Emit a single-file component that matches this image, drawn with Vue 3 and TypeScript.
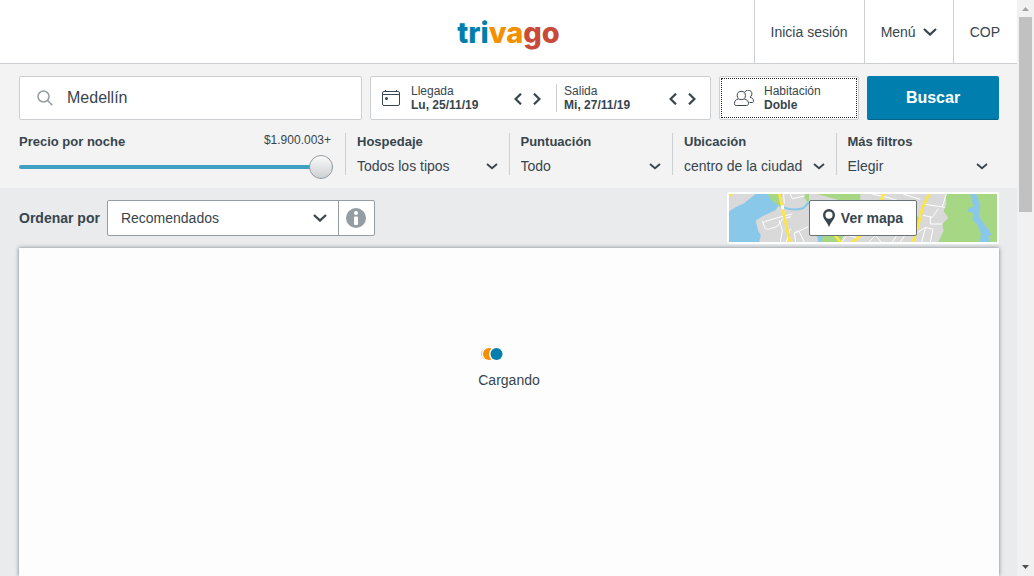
<script setup lang="ts">
import { ref } from 'vue'

interface Filter {
  id: string
  label: string
  options: string[]
}

interface Stay {
  id: string
  label: string
  value: string
}

const destination = ref('Medellín')
const price = ref(100)
const sort = ref('Recomendados')

const stays: Stay[] = [
  { id: 'arrival', label: 'Llegada', value: 'Lu, 25/11/19' },
  { id: 'departure', label: 'Salida', value: 'Mi, 27/11/19' },
]

const filters: Filter[] = [
  { id: 'lodging', label: 'Hospedaje', options: ['Todos los tipos'] },
  { id: 'rating', label: 'Puntuación', options: ['Todo'] },
  { id: 'location', label: 'Ubicación', options: ['centro de la ciudad'] },
  { id: 'more', label: 'Más filtros', options: ['Elegir'] },
]
</script>

<template>
  <div class="window">
    <div class="page">
      <header class="header">
        <a class="logo" href="#" aria-label="trivago"><span class="tri">tri</span><span class="va">va</span><span class="go">go</span></a>
        <nav class="nav">
          <a class="nav-item" href="#">Inicia sesión</a>
          <button class="nav-item" type="button">
            Menú
            <svg class="chevron-lg" viewBox="0 0 14 8" aria-hidden="true"><path d="M1 1 L7 6.500 L13 1" /></svg>
          </button>
          <button class="nav-item" type="button">COP</button>
        </nav>
      </header>

      <section class="search">
        <form class="search-row" @submit.prevent>
          <label class="box destination">
            <svg class="search-icon" viewBox="0 0 16 16" aria-hidden="true">
              <circle cx="6.500" cy="6.500" r="5.500" />
              <path d="M10.500 10.500 L15.300 15.300" />
            </svg>
            <input v-model="destination" type="text" aria-label="Destino" />
          </label>

          <div class="box dates">
            <div v-for="stay in stays" :key="stay.id" class="stay" :class="stay.id">
              <button class="stay-main" type="button">
                <svg v-if="stay.id === 'arrival'" class="calendar-icon" viewBox="0 0 18 16" aria-hidden="true">
                  <rect x="0.500" y="1.500" width="17" height="14" rx="1.500" />
                  <path d="M1 4.500 H17 M3.500 0 V2 M14.500 0 V2" />
                  <circle cx="4.500" cy="8.500" r="1.500" />
                </svg>
                <span class="pair">
                  <span>{{ stay.label }}</span>
                  <strong>{{ stay.value }}</strong>
                </span>
              </button>
              <span class="arrows">
                <button type="button" :aria-label="`${stay.label}: día anterior`">
                  <svg viewBox="0 0 8 12" aria-hidden="true"><path d="M7 0.700 L1.600 6 L7 11.300" /></svg>
                </button>
                <button type="button" :aria-label="`${stay.label}: día siguiente`">
                  <svg viewBox="0 0 8 12" aria-hidden="true"><path d="M1 0.700 L6.400 6 L1 11.300" /></svg>
                </button>
              </span>
            </div>
          </div>

          <button class="box room" type="button">
            <svg class="people-icon" viewBox="0 0 20 16" aria-hidden="true">
              <path d="M10.700 2.300 A3.800 3.800 0 1 1 16 7.200 C18.300 7.700 19.500 9.200 19.500 10.800 C19.500 12 19 12.500 18 12.500 H15.500" />
              <path d="M4.300 9 C1.800 9.500 0.500 11.200 0.500 13.400 C0.500 14.700 1.200 15.500 2.500 15.500 H12.500 C13.800 15.500 14.500 14.700 14.500 13.400 C14.500 11.200 13 9.500 10.300 9" />
              <circle cx="7.300" cy="5.500" r="4.100" />
            </svg>
            <span class="pair">
              <span>Habitación</span>
              <strong>Doble</strong>
            </span>
          </button>

          <button class="submit" type="submit">Buscar</button>
        </form>

        <div class="filters">
          <div class="price">
            <div class="price-head">
              <label class="filter-label" for="price">Precio por noche</label>
              <output for="price">$1.900.003+</output>
            </div>
            <input id="price" v-model="price" type="range" min="0" max="100" />
          </div>
          <div v-for="filter in filters" :key="filter.id" class="filter">
            <label class="filter-label" :for="filter.id">{{ filter.label }}</label>
            <div class="filter-control">
              <select :id="filter.id">
                <option v-for="option in filter.options" :key="option">{{ option }}</option>
              </select>
              <svg class="chevron" viewBox="0 0 12 7" aria-hidden="true"><path d="M1 1 L6 5.300 L11 1" /></svg>
            </div>
          </div>
        </div>
      </section>

      <main class="content">
        <div class="toolbar">
          <div class="sort">
            <label for="sort">Ordenar por</label>
            <div class="sort-box">
              <div class="sort-control">
                <select id="sort" v-model="sort">
                  <option>Recomendados</option>
                </select>
                <svg class="chevron-lg" viewBox="0 0 14 8" aria-hidden="true"><path d="M1 1 L7 6.500 L13 1" /></svg>
              </div>
              <button class="info" type="button" aria-label="Información">
                <svg viewBox="0 0 20 20" aria-hidden="true">
                  <circle class="info-disc" cx="10" cy="10" r="10" />
                  <circle class="info-mark" cx="10" cy="5" r="2" />
                  <rect class="info-mark" x="8" y="8.500" width="4" height="8.500" rx="1" />
                </svg>
              </button>
            </div>
          </div>

          <div class="map">
            <svg class="map-art" viewBox="0 0 804 144" preserveAspectRatio="xMidYMid slice" aria-hidden="true">
              <rect class="land" width="804" height="144" />
              <path class="water" d="M0 52 L20 40 L45 28 L80 0 H118 Q130 20 150 32 L140 48 L98 68 L80 80 L88 112 L96 124 L90 144 H0 Z" />
              <path class="park" d="M116 0 H160 L154 16 L162 36 Q140 36 126 16 Z" />
              <path class="park" d="M228 0 H240 V20 L234 24 L226 10 Z" />
              <path class="water-line" d="M150 34 Q188 54 224 42 L240 24" />
              <path class="park" d="M264 0 H394 V18 H330 Z M262 124 H345 L334 144 H280 Z M562 68 H572 L566 98 H562 Z" />
              <path class="water" d="M264 124 H282 L278 144 H268 Z" />
              <path class="park" d="M650 0 H804 V144 H628 L644 110 L640 90 L658 72 L644 52 L652 30 Z" />
              <path class="water" d="M724 0 H742 L754 34 L750 66 L768 94 L780 108 L788 122 L778 126 L784 144 H752 L756 120 L746 94 L730 76 L734 58 L714 52 L722 40 L734 40 Z" />
              <g class="street">
                <path d="M100 80 L106 98 Q110 110 124 104 L144 98 M104 86 Q106 80 190 60 M144 98 L160 76 L186 68 M154 144 L160 108 L150 78 M172 144 L184 104 M200 144 L196 118 L238 98 M196 118 L204 110 M210 112 L226 144" />
                <path d="M164 0 L166 28 M184 0 L190 14 L226 6 M430 0 L474 10 L560 36 M522 0 L574 16 M582 30 L648 40 M582 64 L610 70 L628 44 M604 68 V90 L640 90 M562 118 L590 100 L612 106 L604 144 M578 144 L590 100 M652 0 L640 38" />
                <path d="M338 144 L354 124 L388 132 M420 144 L440 124 L456 144 M490 144 L504 124 M514 144 L528 124" />
              </g>
              <g class="road">
                <path d="M150 -4 L160 40 L170 88 L184 148" />
                <path d="M602 -4 L580 42 L566 100 L550 148" />
                <path d="M466 -4 L454 24 M316 122 L338 148 M398 122 L366 148" />
                <path d="M0 6 L8 -2" />
              </g>
              <path class="bridge" d="M160 34 L162 46" />
            </svg>
            <button class="map-button" type="button">
              <svg class="pin" viewBox="0 0 12 18" aria-hidden="true">
                <path d="M6 0 A6 6 0 0 0 0 6 C0 8.500 1.500 10.500 3 12.500 C4.400 14.400 5.200 16.200 6 18 C6.800 16.200 7.600 14.400 9 12.500 C10.500 10.500 12 8.500 12 6 A6 6 0 0 0 6 0 Z M6 2.500 A3.600 3.600 0 1 1 6 9.700 A3.600 3.600 0 1 1 6 2.500 Z" />
              </svg>
              Ver mapa
            </button>
          </div>
        </div>

        <section class="results" aria-busy="true">
          <svg class="loader" viewBox="0 0 22 14" aria-hidden="true">
            <circle class="dot-red" cx="6" cy="7" r="6" />
            <circle class="dot-gap" cx="7.700" cy="7" r="7" />
            <circle class="dot-orange" cx="8" cy="7" r="6" />
            <circle class="dot-gap" cx="15" cy="7" r="7" />
            <circle class="dot-blue" cx="15.500" cy="7" r="6" />
          </svg>
          <p>Cargando</p>
        </section>
      </main>
    </div>

    <div class="scrollbar" aria-hidden="true">
      <svg class="scroll-up" viewBox="0 0 17 17"><path d="M5 11 L8.500 7 L12 11 Z" /></svg>
      <div class="scroll-track"><div class="thumb"></div></div>
      <svg class="scroll-down" viewBox="0 0 17 17"><path d="M5 6 L8.500 10 L12 6 Z" /></svg>
    </div>
  </div>
</template>

<style>
body {
  margin: 0;
}
</style>

<style scoped>
.window {
  display: flex;
  height: 100vh;
  overflow: hidden;
  color: #37454d;
  background: #e9ebed;
  font: 14px/20px "Liberation Sans", Arial, sans-serif;
}

.window * {
  box-sizing: border-box;
}

button,
input,
select {
  margin: 0;
  padding: 0;
  border: 0;
  border-radius: 0;
  color: inherit;
  background: transparent;
  font: inherit;
}

select {
  width: 100%;
  appearance: none;
}

svg {
  display: block;
  flex: none;
}

a {
  color: inherit;
  text-decoration: none;
}

.page {
  display: flex;
  flex: 1;
  flex-direction: column;
  min-width: 0;
}

.header {
  display: grid;
  grid-template-columns: 1fr auto 1fr;
  flex: none;
  height: 64px;
  border-bottom: 1px solid #cdd0d2;
  background: #fff;
}

.logo {
  grid-column: 2;
  align-self: center;
  padding-top: 2px;
  font: 800 29px/36px Inter, sans-serif;
}

.tri {
  color: #007faf;
}

.va {
  color: #f48f00;
}

.go {
  color: #c94a38;
}

.nav {
  display: flex;
  justify-content: flex-end;
}

.nav-item {
  display: flex;
  align-items: center;
  gap: 7px;
  padding: 0 16px;
  border-left: 1px solid #cdd0d2;
  white-space: nowrap;
}

.nav-item:last-child {
  padding-right: 17px;
}

.chevron-lg {
  width: 14px;
  height: 8px;
  fill: none;
  stroke: #37454d;
  stroke-width: 2.3;
}

.search {
  flex: none;
  padding: 12px 18px 13px 19px;
  background: #f3f3f3;
}

.search-row {
  display: grid;
  grid-template-columns: 343fr 341fr 140fr 132fr;
  gap: 8px;
  height: 44px;
}

.box {
  display: flex;
  align-items: center;
  min-width: 0;
  border: 1px solid #cdd0d2;
  border-radius: 2px;
  background: #fff;
}

.destination {
  gap: 14px;
  padding: 0 17px;
}

.destination input {
  flex: 1;
  min-width: 0;
  outline: 0;
  font-size: 16px;
}

.search-icon {
  width: 16px;
  height: 16px;
  fill: none;
  stroke: #949da2;
  stroke-width: 1.5;
}

.stay {
  display: flex;
  align-items: center;
  justify-content: space-between;
  height: 28px;
}

.arrival {
  flex: 185;
  padding: 0 12px 0 11px;
}

.departure {
  flex: 154;
  padding: 0 11px 0 7px;
  border-left: 1px solid #cdd0d2;
}

.stay-main {
  display: flex;
  align-items: center;
  gap: 11px;
}

.calendar-icon {
  width: 18px;
  height: 16px;
  fill: none;
  stroke: #37454d;
}

.calendar-icon circle {
  fill: #37454d;
  stroke: none;
}

.pair {
  display: flex;
  flex-direction: column;
  font-size: 12px;
  line-height: 14px;
  text-align: left;
  white-space: nowrap;
}

.arrows {
  display: flex;
  gap: 5px;
}

.arrows button {
  padding: 1px 3px 0;
}

.arrows svg {
  width: 8px;
  height: 12px;
  fill: none;
  stroke: #37454d;
  stroke-width: 2.2;
}

.room {
  gap: 10px;
  padding: 0 14px;
  outline: 1px dotted #222;
  outline-offset: -3px;
}

.people-icon {
  width: 20px;
  height: 16px;
  fill: none;
  stroke: #37454d;
}

.people-icon circle {
  fill: #fff;
}

.submit {
  border-bottom: 1px solid #00658a;
  border-radius: 2px;
  color: #fff;
  background: #007faf;
  font-size: 16px;
  font-weight: bold;
}

.filters {
  display: grid;
  grid-template-columns: 652fr repeat(4, 327fr);
  align-items: start;
  height: 42px;
  margin-top: 13px;
}

.price {
  padding-right: 12px;
}

.price-head {
  display: flex;
  justify-content: space-between;
  height: 22px;
}

.price-head output {
  padding-right: 2px;
  font-size: 12px;
  line-height: 14px;
}

.filter-label {
  display: block;
  font-size: 13px;
  font-weight: bold;
  line-height: 18px;
}

.price input {
  display: block;
  width: 100%;
  height: 24px;
  appearance: none;
}

.price input::-webkit-slider-runnable-track {
  height: 4px;
  border-radius: 2px;
  background: #3fa0c2;
}

.price input::-webkit-slider-thumb {
  width: 24px;
  height: 24px;
  margin-top: -10px;
  border: 1px solid #949da2;
  border-radius: 50%;
  background: linear-gradient(#fafafa, #cdd0d2);
  appearance: none;
}

.filter {
  min-width: 0;
  height: 42px;
  padding: 0 11px;
  border-left: 1px solid #cdd0d2;
}

.filter-control {
  position: relative;
  margin-top: 5px;
}

.filter-control select {
  display: block;
  height: 20px;
}

.chevron {
  position: absolute;
  top: 7px;
  right: 0;
  width: 12px;
  height: 7px;
  fill: none;
  stroke: #37454d;
  stroke-width: 1.8;
  pointer-events: none;
}

.content {
  display: flex;
  flex: 1;
  flex-direction: column;
  min-height: 0;
  padding: 4px 18px 0 19px;
}

.toolbar {
  display: flex;
  align-items: center;
  justify-content: space-between;
  margin-bottom: 4px;
}

.sort {
  display: flex;
  align-items: center;
  gap: 7px;
}

.sort label {
  font-weight: bold;
}

.sort-box {
  display: flex;
  height: 36px;
  border: 1px solid #949da2;
  border-radius: 2px;
  background: #fff;
}

.sort-control {
  position: relative;
  width: 230px;
}

.sort-control select {
  height: 100%;
  padding: 0 36px 0 13px;
}

.sort-control .chevron-lg {
  position: absolute;
  top: 13px;
  right: 11px;
  pointer-events: none;
}

.info {
  display: grid;
  place-items: center;
  width: 36px;
  border-left: 1px solid #949da2;
}

.info svg {
  width: 20px;
  height: 20px;
}

.info-disc {
  fill: #949da2;
}

.info-mark {
  fill: #fff;
}

.map {
  display: grid;
  width: 272px;
  height: 52px;
  border: 2px solid #fff;
  border-radius: 2px;
}

.map-art,
.map-button {
  grid-area: 1 / 1;
}

.map-art {
  width: 100%;
  height: 100%;
}

.land {
  fill: #d9d9d9;
}

.water {
  fill: #8ac8ea;
}

.park {
  fill: #a6d785;
}

.water-line,
.street,
.road,
.bridge {
  fill: none;
}

.water-line {
  stroke: #8ac8ea;
  stroke-width: 6;
}

.street {
  stroke: #fff;
  stroke-width: 3;
}

.road {
  stroke: #ffe63b;
  stroke-width: 8;
}

.bridge {
  stroke: #fff;
  stroke-width: 8;
}

.map-button {
  z-index: 1;
  display: flex;
  align-items: center;
  place-self: center;
  gap: 6px;
  height: 36px;
  padding: 0 13px;
  border: 1px solid #6c7176;
  border-radius: 2px;
  background: #fff;
  font-weight: bold;
}

.pin {
  width: 12px;
  height: 18px;
  fill: #37454d;
  fill-rule: evenodd;
}

.results {
  display: flex;
  flex: 1;
  flex-direction: column;
  align-items: center;
  padding-top: 99px;
  background: #fdfdfd;
  box-shadow: 0 0 4px rgba(40, 50, 56, 0.6);
}

.results p {
  margin: 9px 0 0;
}

.loader {
  width: 22px;
  height: 14px;
  margin-right: 34px;
}

.dot-red {
  fill: #e9a79d;
}

.dot-gap {
  fill: #fdfdfd;
}

.dot-orange {
  fill: #f48f00;
}

.dot-blue {
  fill: #007faf;
}

.scrollbar {
  display: flex;
  flex: none;
  flex-direction: column;
  width: 17px;
  background: #f1f1f1;
}

.scroll-track {
  flex: 1;
  padding: 0 2px;
}

.thumb {
  height: 36%;
  background: #c1c1c1;
}

.scroll-up {
  fill: #a3a3a3;
}

.scroll-down {
  fill: #505050;
}
</style>
